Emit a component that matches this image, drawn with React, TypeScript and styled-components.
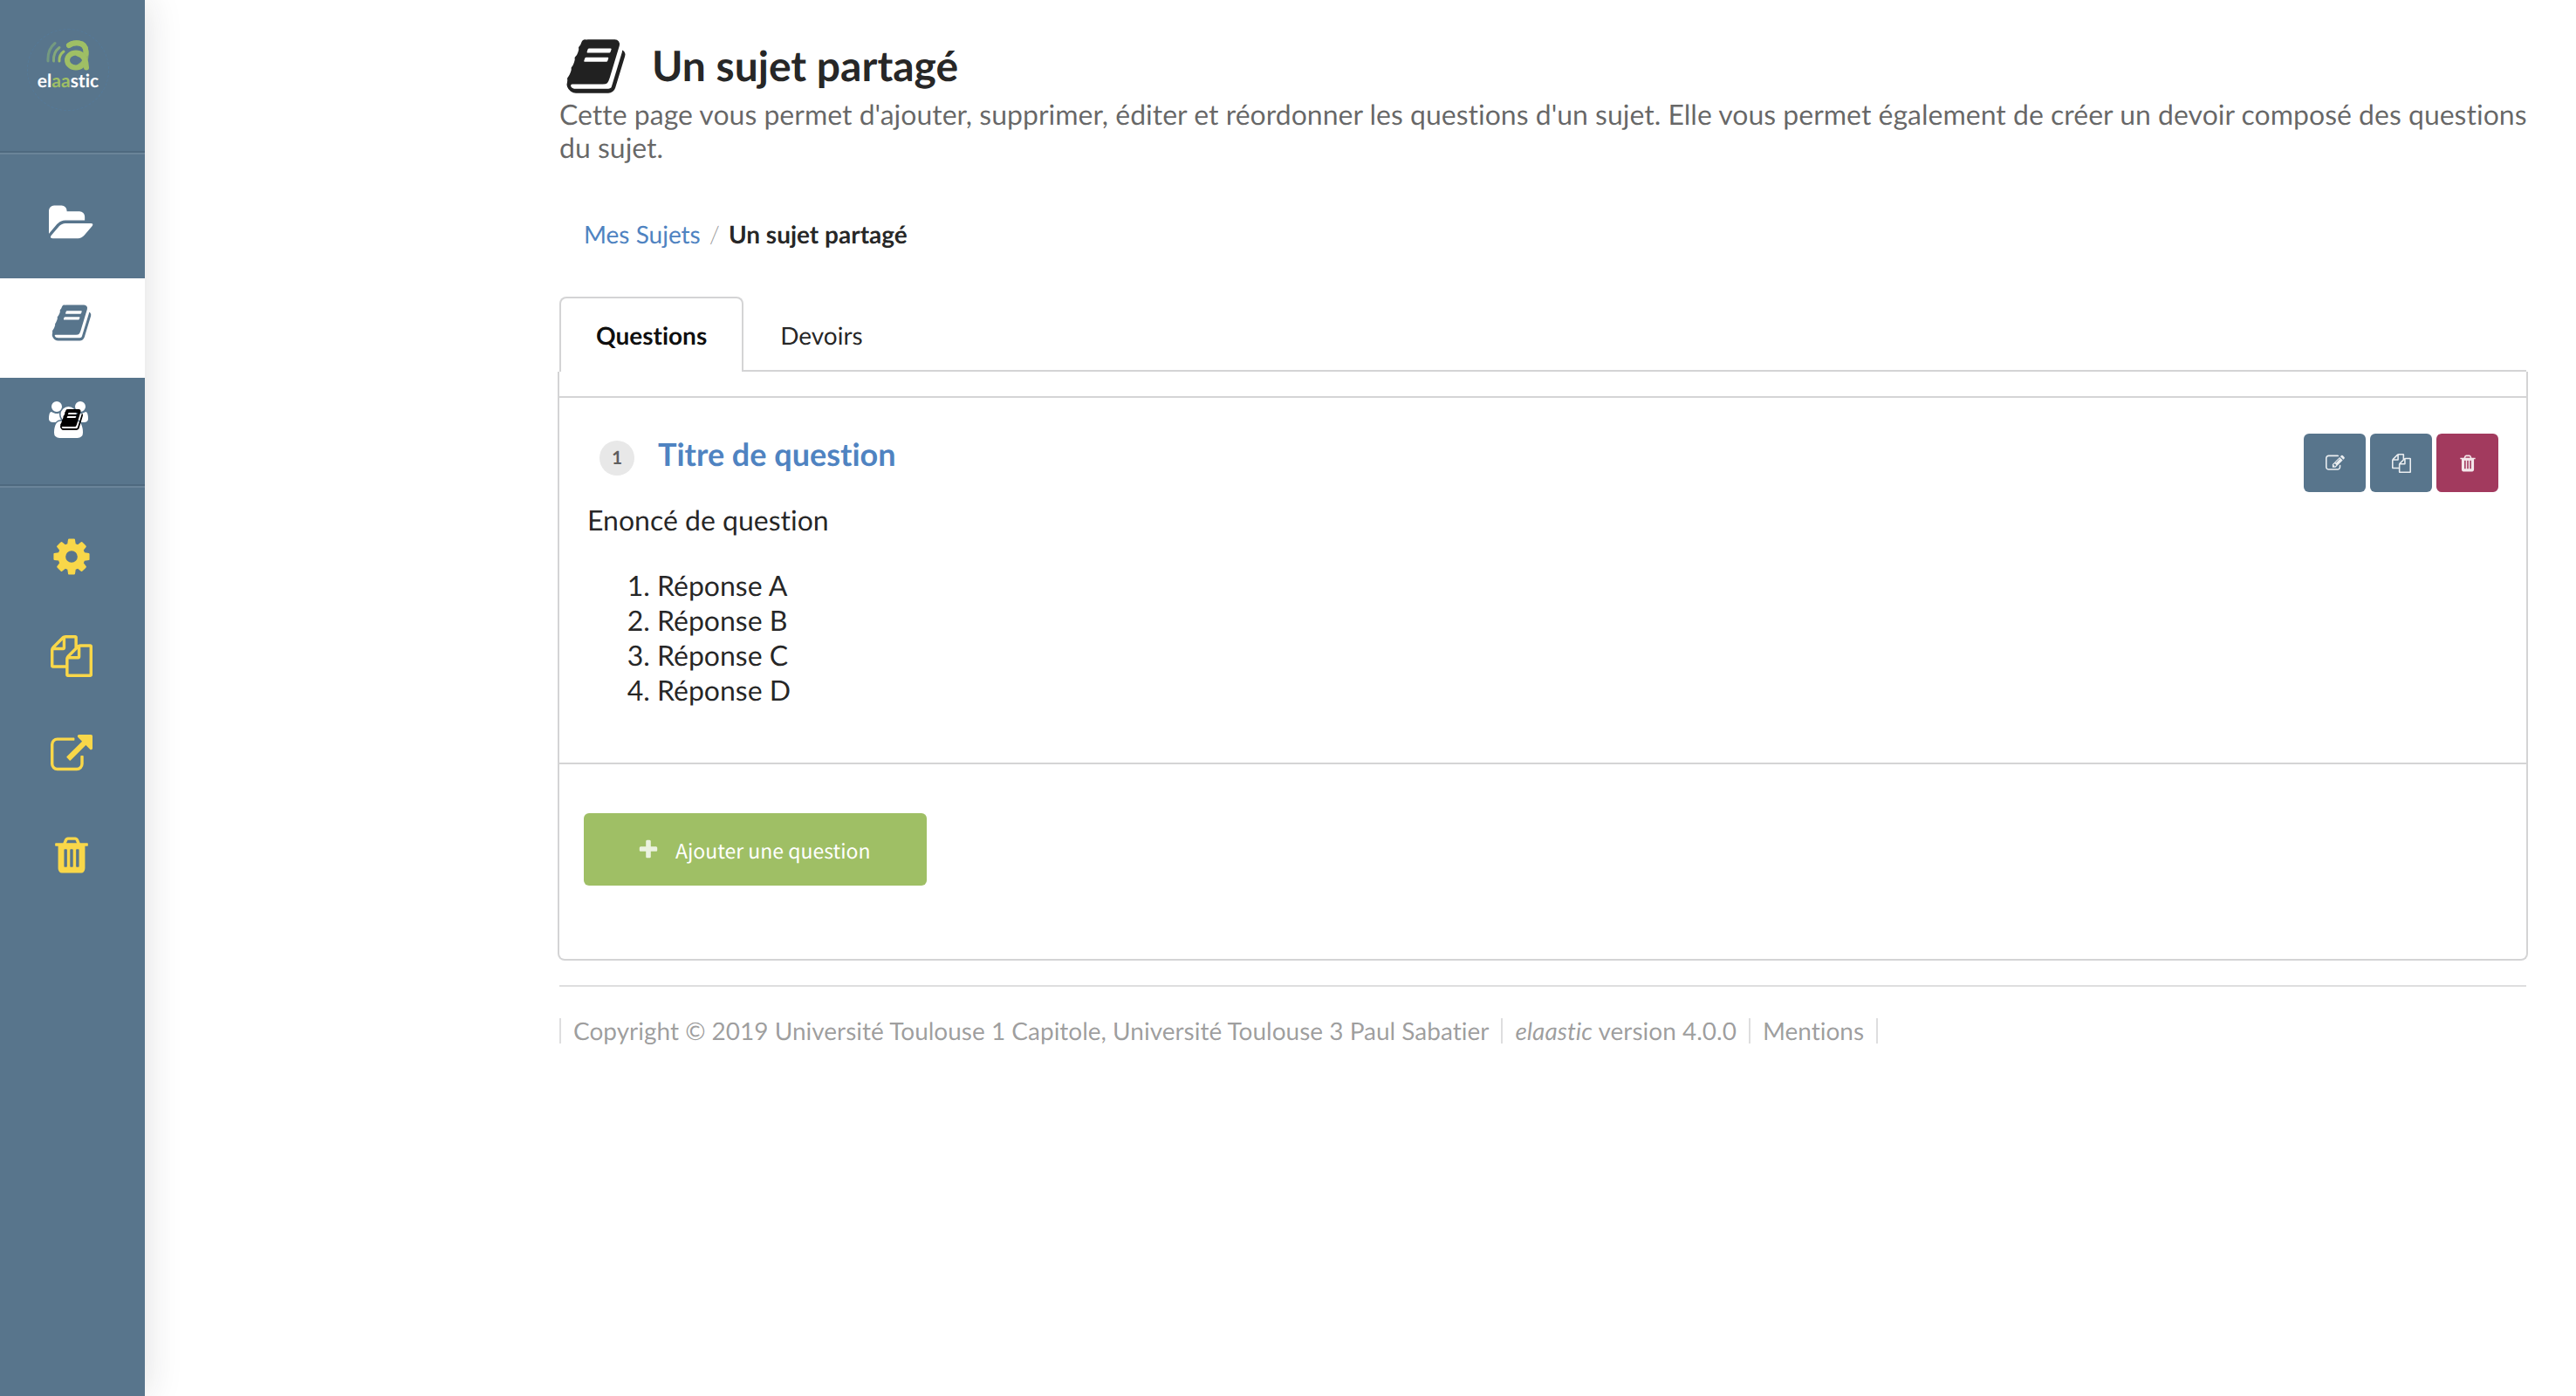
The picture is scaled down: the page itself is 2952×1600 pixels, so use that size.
import React from "react";
import styled, { createGlobalStyle } from "styled-components";

const colors = {
  blue: "#58758c",
  link: "#4f83c1",
  yellow: "#f9d749",
  green: "#9fbf65",
  red: "#a23a5e",
  ink: "rgba(0, 0, 0, 0.87)",
  line: "#d4d4d5",
};

const GlobalStyle = createGlobalStyle`
  *, *::before, *::after { box-sizing: border-box; }
  body {
    margin: 0;
    background: #fff;
    color: ${colors.ink};
    font-family: Lato, "Liberation Sans", sans-serif;
    font-size: 28px;
    font-variant-ligatures: none;
    text-rendering: geometricPrecision;
    line-height: 40px;
  }
  h1, h2, p, ol, ul { margin: 0; padding: 0; }
  a { color: ${colors.link}; text-decoration: none; }
  button {
    font: inherit;
    font-variant-ligatures: none;
    text-rendering: inherit;
    border: 0;
    cursor: pointer;
  }
`;

/* ---------- icons ---------- */

type IconName = "book" | "cog" | "copy" | "external" | "trash" | "edit" | "plus" | "folder" | "users";

const glyphs: Record<IconName, { d: string; x?: number; w?: number }> = {
  book: {
    d: "M1703 478q40 57 18 129l-275 906q-19 64-76.5 107.5t-122.5 43.5h-923q-77 0-148.500-53.5t-99.5-131.5q-24-67-2-127 0-4 3-27t4-37q1-8-3-21.5t-3-19.5q2-11 8-21t16.5-23.5 16.5-23.5q23-38 45-91.5t30-91.5q3-10 .5-30t-.5-28q3-11 17-28t17-23q21-36 42-92t25-90q1-9-2.5-32t.5-28q4-13 22-30.5t22-22.5q19-26 42.5-84.5t27.5-96.5q1-8-3-25.5t-2-26.5q2-8 9-18t18-23 17-21q8-12 16.5-30.5t15-35 16-36 19.5-32 26.5-23.5 36-11.5 47.5 5.5l-1 3q38-9 51-9h761q74 0 114 56t18 130l-274 906q-36 119-71.5 153.5t-128.5 34.5h-869q-27 0-38 15-11 16-1 43 24 70 144 70h923q29 0 56-15.5t35-41.5l300-987q7-22 5-57 38 15 59 43zm-1064 2q-4 13 2 22.5t20 9.5h608q13 0 25.5-9.5t16.5-22.5l21-64q4-13-2-22.5t-20-9.5h-608q-13 0-25.5 9.5t-16.5 22.5zm-83 256q-4 13 2 22.5t20 9.5h608q13 0 25.5-9.5t16.5-22.5l21-64q4-13-2-22.5t-20-9.5h-608q-13 0-25.5 9.5t-16.5 22.5z",
  },
  cog: {
    d: "M1152 896q0-106-75-181t-181-75-181 75-75 181 75 181 181 75 181-75 75-181zm512-109v222q0 12-8 23t-20 13l-185 28q-19 54-39 91 35 50 107 138 10 12 10 25t-9 23q-27 37-99 108t-94 71q-12 0-26-9l-138-108q-44 23-91 38-16 136-29 186-7 28-36 28h-222q-14 0-24.5-8.5t-11.5-21.5l-28-184q-49-16-90-37l-141 107q-10 9-25 9-14 0-25-11-126-114-165-168-7-10-7-23 0-12 8-23 15-21 51-66.5t54-70.5q-27-50-41-99l-183-27q-13-2-21-12.5t-8-23.5v-222q0-12 8-23t19-13l186-28q14-46 39-92-40-57-107-138-10-12-10-24 0-10 9-23 26-36 98.5-107.5t94.5-71.5q13 0 26 10l138 107q44-23 91-38 16-136 29-186 7-28 36-28h222q14 0 24.5 8.5t11.5 21.5l28 184q49 16 90 37l142-107q9-9 24-9 13 0 25 10 129 119 165 170 7 8 7 22 0 12-8 23-15 21-51 66.5t-54 70.5q26 50 41 98l183 28q13 2 21 12.5t8 23.5z",
  },
  copy: {
    d: "M1696 384q40 0 68 28t28 68v1216q0 40-28 68t-68 28h-960q-40 0-68-28t-28-68v-288h-544q-40 0-68-28t-28-68v-672q0-40 20-88t48-76l408-408q28-28 76-48t88-20h416q40 0 68 28t28 68v328q68-40 128-40h416zm-544 213l-299 299h299v-299zm-640-384l-299 299h299v-299zm196 647l316-316v-416h-384v416q0 40-28 68t-68 28h-416v640h512v-256q0-40 20-88t48-76zm956 804v-1152h-384v416q0 40-28 68t-68 28h-416v640h896z",
  },
  external: {
    d: "M1408 928v320q0 119-84.5 203.5t-203.5 84.5h-832q-119 0-203.5-84.5t-84.5-203.5v-832q0-119 84.5-203.5t203.5-84.5h704q14 0 23 9t9 23v64q0 14-9 23t-23 9h-704q-66 0-113 47t-47 113v832q0 66 47 113t113 47h832q66 0 113-47t47-113v-320q0-14 9-23t23-9h64q14 0 23 9t9 23zm384-864v512q0 26-19 45t-45 19-45-19l-176-176-652 652q-10 10-23 10t-23-10l-114-114q-10-10-10-23t10-23l652-652-176-176q-19-19-19-45t19-45 45-19h512q26 0 45 19t19 45z",
  },
  trash: {
    d: "M704 1376v-704q0-14-9-23t-23-9h-64q-14 0-23 9t-9 23v704q0 14 9 23t23 9h64q14 0 23-9t9-23zm256 0v-704q0-14-9-23t-23-9h-64q-14 0-23 9t-9 23v704q0 14 9 23t23 9h64q14 0 23-9t9-23zm256 0v-704q0-14-9-23t-23-9h-64q-14 0-23 9t-9 23v704q0 14 9 23t23 9h64q14 0 23-9t9-23zm-544-992h448l-48-117q-7-9-17-11h-317q-10 2-17 11zm928 32v64q0 14-9 23t-23 9h-96v948q0 83-47 143.5t-113 60.5h-832q-66 0-113-58.5t-47-141.500v-952h-96q-14 0-23-9t-9-23v-64q0-14 9-23t23-9h309l70-167q15-37 54-63t79-26h320q40 0 79 26t54 63l70 167h309q14 0 23 9t9 23z",
  },
  edit: {
    d: "M888 1184l116-116-152-152-116 116v56h96v96h56zm440-720q-16-16-33 1l-350 350q-17 17-1 33t33-1l350-350q17-17 1-33zm80 594v190q0 119-84.5 203.5t-203.5 84.5h-832q-119 0-203.5-84.5t-84.5-203.5v-832q0-119 84.5-203.5t203.5-84.5h832q63 0 117 25 15 7 18 23 3 17-9 29l-49 49q-14 14-32 8-23-6-45-6h-832q-66 0-113 47t-47 113v832q0 66 47 113t113 47h832q66 0 113-47t47-113v-126q0-13 9-22l64-64q15-15 35-7t20 29zm-96-738l288 288-672 672h-288v-288zm444 132l-92 92-288-288 92-92q28-28 68-28t68 28l152 152q28 28 28 68t-28 68z",
  },
  plus: {
    d: "M1600 736v192q0 40-28 68t-68 28h-416v416q0 40-28 68t-68 28h-192q-40 0-68-28t-28-68v-416h-416q-40 0-68-28t-28-68v-192q0-40 28-68t68-28h416v-416q0-40 28-68t68-28h192q40 0 68 28t28 68v416h416q40 0 68 28t28 68z",
  },
  folder: {
    x: -64,
    w: 1920,
    d: "M1815 952q0 31-31 66l-336 396q-43 51-120.5 86.5t-143.5 35.5h-1088q-34 0-60.5-13t-26.5-43q0-31 31-66l336-396q43-51 120.5-86.5t143.5-35.5h1088q34 0 60.5 13t26.5 43zm-343-344v160h-832q-94 0-197 47.5t-164 119.5l-337 396-5 6q0-4-.5-12.5t-.5-12.5v-960q0-92 66-158t158-66h320q92 0 158 66t66 158v32h544q92 0 158 66t66 158z",
  },
  users: {
    x: -64,
    w: 1920,
    d: "M529 896q-162 5-265 128h-134q-82 0-138-40.5t-56-118.5q0-353 124-353 6 0 43.5 21t97.5 42.5 119 21.5q67 0 133-23-5 37-5 66 0 139 81 256zm1071 637q0 120-73 189.5t-194 69.5h-874q-121 0-194-69.5t-73-189.5q0-53 3.5-103.5t14-109 26.5-108.5 43-97.5 62-81 85.5-53.5 111.5-20q10 0 43 21.5t73 48 107 48 135 21.5 135-21.5 107-48 73-48 43-21.5q61 0 111.5 20t85.5 53.5 62 81 43 97.5 26.5 108.5 14 109 3.5 103.500zm-1024-1277q0 106-75 181t-181 75-181-75-75-181 75-181 181-75 181 75 75 181zm704 384q0 159-112.5 271.5t-271.5 112.5-271.5-112.5-112.5-271.5 112.5-271.5 271.5-112.5 271.5 112.5 112.5 271.5zm576 225q0 78-56 118.5t-138 40.5h-134q-103-123-265-128 81-117 81-256 0-29-5-66 66 23 133 23 59 0 119-21.5t97.5-42.5 43.5-21q124 0 124 353zm-128-609q0 106-75 181t-181 75-181-75-75-181 75-181 181-75 181 75 75 181z",
  },
};

const Glyph = styled.svg<{ $size: number }>`
  display: block;
  flex: none;
  height: ${(p) => p.$size}px;
  fill: currentColor;
`;

function Icon({ name, size }: { name: IconName; size: number }) {
  const { d, x = 0, w = 1792 } = glyphs[name];
  return (
    <Glyph $size={size} viewBox={`${x} 0 ${w} 1792`} aria-hidden="true">
      <path d={d} />
    </Glyph>
  );
}

/* ---------- sidebar ---------- */

const Page = styled.div`
  display: flex;
  min-height: 100vh;
`;

const Sidebar = styled.nav`
  flex: none;
  width: 166px;
  background: ${colors.blue};
  box-shadow: 0 0 40px rgba(34, 36, 38, 0.15);
`;

const LogoLink = styled.a`
  display: flex;
  justify-content: center;
  height: 173px;
  padding: 33px 10px 0 0;
  color: #fff;
`;

const LogoBadge = styled.span`
  display: flex;
  flex-direction: column;
  align-items: center;
  width: 94px;
  height: 94px;
  padding-top: 12px;
  border: 1px dashed rgba(79, 131, 180, 0.3);
  border-radius: 50%;
`;

const LogoMark = styled.svg`
  display: block;
  width: 50px;
  height: 35px;
`;

const LogoName = styled.span`
  font-size: 21px;
  font-weight: 700;
  line-height: 24px;
`;

const LogoAccent = styled.span`
  color: ${colors.green};
`;

const MenuGroup = styled.ul`
  list-style: none;
  padding: 30px 0 8px;
  border-top: 2px solid #4e697f;
  box-shadow: inset 0 2px 0 #6a8499;
`;

const GroupInner = styled.li`
  display: block;
`;

const MenuLink = styled.a<{ $tone: "white" | "yellow"; $active?: boolean }>`
  display: flex;
  justify-content: center;
  height: 114px;
  padding: 27px 2px 0 0;
  color: ${(p) => (p.$active ? colors.blue : p.$tone === "white" ? "#fff" : colors.yellow)};
  background: ${(p) => (p.$active ? "#fff" : "transparent")};
`;

const IconStack = styled.span`
  position: relative;
  width: 52px;
`;

const StackCorner = styled.span`
  position: absolute;
  top: 7px;
  left: 12px;
  color: #000;
`;

function Logo() {
  return (
    <LogoLink href="#accueil" aria-label="elaastic">
      <LogoBadge>
        <LogoMark viewBox="0 0 50 35" fill="none" strokeLinecap="round" aria-hidden="true">
          <path d="M2 24C1.500 15 4.500 8 10 3.500" stroke="#749a80" strokeWidth="3" />
          <path d="M8.500 24C8 17 10.500 12 15 8.500" stroke="#84a87a" strokeWidth="3" />
          <path d="M15 24C14.500 19 16.500 15.500 20 13" stroke="#9fbf65" strokeWidth="3" />
          <path d="M26 6C31 2.500 45 .5 45.500 13C46 24 44 26 38 30" stroke="#8fae70" strokeWidth="6" />
          <path d="M26 6C31 2.500 45 .5 45.500 13V16" stroke="#9fbf65" strokeWidth="6" />
          <ellipse cx="34" cy="23" rx="10" ry="8.500" stroke="#9fbf65" strokeWidth="6" />
          <path d="M36 15.500C43 17 46 24 46 31.500" stroke="#9fbf65" strokeWidth="6" />
        </LogoMark>
        <LogoName>
          el<LogoAccent>aa</LogoAccent>stic
        </LogoName>
      </LogoBadge>
    </LogoLink>
  );
}

/* ---------- main column ---------- */

const Main = styled.main`
  flex: 1;
  min-width: 0;
  padding: 40px 57px 28px 475px;
`;

const TitleRow = styled.div`
  display: flex;
  align-items: center;
  gap: 28px;
  padding-left: 6px;
`;

const PageTitle = styled.h1`
  font-size: 48px;
  line-height: 56px;
  font-weight: 700;
`;

const Intro = styled.p`
  margin-right: -28px;
  font-size: 32px;
  line-height: 38px;
  color: rgba(0, 0, 0, 0.6);
`;

const Breadcrumb = styled.nav`
  display: flex;
  gap: 10px;
  margin: 60px 0 52px;
  padding-left: 28px;
`;

const Slash = styled.span`
  color: rgba(0, 0, 0, 0.4);
  font-weight: 300;
`;

const Current = styled.span`
  font-weight: 700;
`;

const TabList = styled.div`
  display: flex;
  border-bottom: 2px solid ${colors.line};
`;

const Tab = styled.button<{ $active?: boolean }>`
  height: 86px;
  margin-bottom: -2px;
  padding: 0 40px;
  border: 2px solid ${(p) => (p.$active ? colors.line : "transparent")};
  border-bottom: 0;
  border-radius: 8px 8px 0 0;
  background: ${(p) => (p.$active ? "#fff" : "transparent")};
  color: ${(p) => (p.$active ? "rgba(0, 0, 0, 0.95)" : colors.ink)};
  font-weight: ${(p) => (p.$active ? 700 : 400)};
  line-height: 28px;
`;

const Panel = styled.section`
  margin: 0 -2px;
  padding-top: 28px;
  border: 2px solid ${colors.line};
  border-top: 0;
  border-radius: 0 0 8px 8px;
`;

const Question = styled.article`
  padding: 41px 32px 63px;
  border-top: 2px solid ${colors.line};
  border-bottom: 2px solid ${colors.line};
  font-size: 32px;
`;

const QuestionHead = styled.header`
  display: flex;
  align-items: flex-start;
  gap: 27px;
  height: 67px;
  margin-bottom: 12px;
  padding-left: 14px;
`;

const Rank = styled.span`
  width: 40px;
  height: 40px;
  margin-top: 8px;
  border-radius: 50%;
  background: #e8e8e8;
  color: rgba(0, 0, 0, 0.6);
  font-size: 21px;
  font-weight: 700;
  text-align: center;
`;

const QuestionTitle = styled.h2`
  flex: 1;
  font-size: 36px;
  line-height: 46px;
`;

const Actions = styled.div`
  display: flex;
  gap: 5px;
`;

const ActionButton = styled.button<{ $tone: string }>`
  display: flex;
  align-items: center;
  justify-content: center;
  width: 71px;
  height: 67px;
  padding: 0;
  border-radius: 6px;
  background: ${(p) => p.$tone};
  color: rgba(255, 255, 255, 0.88);
`;

const Answers = styled.ol`
  margin-top: 35px;
  padding-left: 80px;
`;

const AddArea = styled.div`
  padding: 56px 28px 84px;
`;

const AddButton = styled.button`
  display: flex;
  align-items: center;
  gap: 18px;
  height: 83px;
  padding: 0 65px 0 61px;
  border-radius: 6px;
  background: ${colors.green};
  color: #fff;
  font-family: "Noto Sans CJK SC", "Noto Sans", sans-serif;
  font-size: 23px;
  font-weight: 400;
  line-height: 28px;
`;

const Faded = styled.span`
  opacity: 0.8;
`;

const Footer = styled.footer`
  display: flex;
  margin-top: 28px;
  padding-top: 36px;
  border-top: 2px solid #dededf;
  color: rgba(0, 0, 0, 0.4);
  line-height: 29px;
`;

const FooterItem = styled.span`
  padding: 0 14px;
  border-left: 2px solid #dededf;

  &:last-child {
    border-right: 2px solid #dededf;
  }
`;

const FooterLink = styled.a`
  color: inherit;
`;

const answers = ["Réponse A", "Réponse B", "Réponse C", "Réponse D"];

const tools: { name: IconName; label: string }[] = [
  { name: "cog", label: "Paramètres" },
  { name: "copy", label: "Dupliquer" },
  { name: "external", label: "Partager" },
  { name: "trash", label: "Supprimer" },
];

export default function App() {
  return (
    <>
      <GlobalStyle />
      <Page>
        <Sidebar>
          <Logo />
          <MenuGroup>
            <GroupInner>
              <MenuLink href="#devoirs" $tone="white" aria-label="Mes devoirs">
                <Icon name="folder" size={48} />
              </MenuLink>
            </GroupInner>
            <GroupInner>
              <MenuLink href="#sujets" $tone="white" $active aria-label="Mes sujets">
                <Icon name="book" size={48} />
              </MenuLink>
            </GroupInner>
            <GroupInner>
              <MenuLink href="#partages" $tone="white" aria-label="Sujets partagés">
                <IconStack>
                  <Icon name="users" size={42} />
                  <StackCorner>
                    <Icon name="book" size={28} />
                  </StackCorner>
                </IconStack>
              </MenuLink>
            </GroupInner>
          </MenuGroup>
          <MenuGroup>
            {tools.map((tool) => (
              <GroupInner key={tool.name}>
                <MenuLink href={`#${tool.name}`} $tone="yellow" aria-label={tool.label}>
                  <Icon name={tool.name} size={48} />
                </MenuLink>
              </GroupInner>
            ))}
          </MenuGroup>
        </Sidebar>

        <Main>
          <TitleRow>
            <Icon name="book" size={72} />
            <PageTitle>Un sujet partagé</PageTitle>
          </TitleRow>
          <Intro>
            Cette page vous permet d'ajouter, supprimer, éditer et réordonner les questions d'un sujet. Elle vous permet
            également de créer un devoir composé des questions du sujet.
          </Intro>

          <Breadcrumb>
            <a href="#sujets">Mes Sujets</a>
            <Slash>/</Slash>
            <Current>Un sujet partagé</Current>
          </Breadcrumb>

          <TabList role="tablist">
            <Tab role="tab" aria-selected="true" $active>
              Questions
            </Tab>
            <Tab role="tab" aria-selected="false">
              Devoirs
            </Tab>
          </TabList>

          <Panel>
            <Question>
              <QuestionHead>
                <Rank>1</Rank>
                <QuestionTitle>
                  <a href="#question-1">Titre de question</a>
                </QuestionTitle>
                <Actions>
                  <ActionButton $tone={colors.blue} aria-label="Modifier">
                    <Icon name="edit" size={22} />
                  </ActionButton>
                  <ActionButton $tone={colors.blue} aria-label="Dupliquer">
                    <Icon name="copy" size={22} />
                  </ActionButton>
                  <ActionButton $tone={colors.red} aria-label="Supprimer">
                    <Icon name="trash" size={22} />
                  </ActionButton>
                </Actions>
              </QuestionHead>
              <p>Enoncé de question</p>
              <Answers>
                {answers.map((answer) => (
                  <li key={answer}>{answer}</li>
                ))}
              </Answers>
            </Question>
            <AddArea>
              <AddButton>
                <Faded>
                  <Icon name="plus" size={26} />
                </Faded>
                Ajouter une question
              </AddButton>
            </AddArea>
          </Panel>

          <Footer>
            <FooterItem>Copyright © 2019 Université Toulouse 1 Capitole, Université Toulouse 3 Paul Sabatier</FooterItem>
            <FooterItem>
              <em>elaastic</em> version 4.0.0
            </FooterItem>
            <FooterItem>
              <FooterLink href="#mentions">Mentions</FooterLink>
            </FooterItem>
          </Footer>
        </Main>
      </Page>
    </>
  );
}
